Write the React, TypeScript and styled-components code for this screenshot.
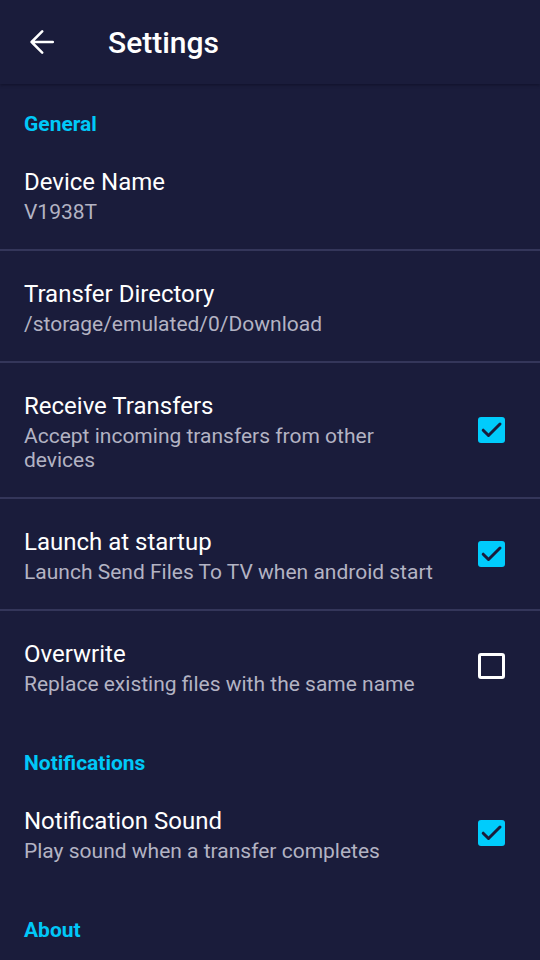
import React from 'react'
import styled, { createGlobalStyle } from 'styled-components'

const GlobalStyle = createGlobalStyle`
  html, body {
    margin: 0;
    padding: 0;
    background: #1a1c3b;
  }
  body {
    font-family: Roboto, "Noto Sans", sans-serif;
    -webkit-font-smoothing: antialiased;
  }
`

const Screen = styled.div`
  width: 540px;
  height: 960px;
  overflow: hidden;
  background: #1a1c3b;
  color: #ffffff;
`

const TopBar = styled.header`
  height: 84px;
  display: flex;
  align-items: center;
  padding: 0 24px;
  gap: 48px;
  background: #1a1c3b;
  box-shadow: 0 1px 3px rgba(10, 10, 30, 0.6);
  position: relative;
  z-index: 1;
`

const BackBtn = styled.button`
  width: 36px;
  height: 36px;
  padding: 0;
  border: none;
  background: transparent;
  display: flex;
  align-items: center;
  justify-content: center;
  color: #ffffff;
`

const Title = styled.h1`
  margin: 0;
  font-size: 30px;
  font-weight: 500;
`

const SectionTitle = styled.div`
  height: 55px;
  box-sizing: border-box;
  padding: 28px 24px 0;
  font-size: 21px;
  line-height: 24px;
  font-weight: 700;
  color: #00c8f8;
`

const Row = styled.div<{ $divider?: boolean }>`
  display: flex;
  align-items: center;
  gap: 14px;
  padding: 28px 24px 25px 24px;
  box-sizing: border-box;
  border-bottom: 2px solid ${({ $divider }) => ($divider ? '#34365a' : 'transparent')};
`

const RowText = styled.div`
  flex: 1;
  min-width: 0;
`

const RowTitle = styled.div`
  font-size: 24px;
  line-height: 30px;
  color: #ffffff;
`

const RowSub = styled.div`
  font-size: 21px;
  line-height: 24px;
  margin-top: 3px;
  color: #b3b3c3;
  max-width: 416px;
`

const Box = styled.span<{ $checked: boolean }>`
  flex: none;
  width: 27px;
  height: 26px;
  margin: 0 11px 4px 0;
  box-sizing: border-box;
  border-radius: 3px;
  display: flex;
  align-items: center;
  justify-content: center;
  background: ${({ $checked }) => ($checked ? '#00ccfc' : 'transparent')};
  border: ${({ $checked }) => ($checked ? 'none' : '3px solid #ffffff')};
`

interface ItemProps {
  title: string
  sub: string
  checked?: boolean
  divider?: boolean
}

const Check = () => (
  <svg width="27" height="26" viewBox="0 0 27 26" fill="none">
    <path d="M5.2 13.2l5.3 5.3 11.5-11.5" stroke="#1a1c3b" strokeWidth="3" strokeLinecap="round" strokeLinejoin="round" />
  </svg>
)

const Item: React.FC<ItemProps> = ({ title, sub, checked, divider }) => (
  <Row $divider={divider}>
    <RowText>
      <RowTitle>{title}</RowTitle>
      <RowSub>{sub}</RowSub>
    </RowText>
    {checked !== undefined && <Box $checked={checked}>{checked && <Check />}</Box>}
  </Row>
)

export default function App() {
  return (
    <Screen>
      <GlobalStyle />
      <TopBar>
        <BackBtn aria-label="Back">
          <svg width="24" height="24" viewBox="0 0 24 24" fill="none">
            <path d="M22.8 12H1.6M12.2 1.4L1.6 12l10.6 10.6" stroke="#ffffff" strokeWidth="2.5" strokeLinecap="round" strokeLinejoin="round" />
          </svg>
        </BackBtn>
        <Title>Settings</Title>
      </TopBar>

      <SectionTitle>General</SectionTitle>
      <Item title="Device Name" sub="V1938T" divider />
      <Item title="Transfer Directory" sub="/storage/emulated/0/Download" divider />
      <Item title="Receive Transfers" sub="Accept incoming transfers from other devices" checked divider />
      <Item title="Launch at startup" sub="Launch Send Files To TV when android start" checked divider />
      <Item title="Overwrite" sub="Replace existing files with the same name" checked={false} />

      <SectionTitle>Notifications</SectionTitle>
      <Item title="Notification Sound" sub="Play sound when a transfer completes" checked />

      <SectionTitle>About</SectionTitle>
    </Screen>
  )
}
